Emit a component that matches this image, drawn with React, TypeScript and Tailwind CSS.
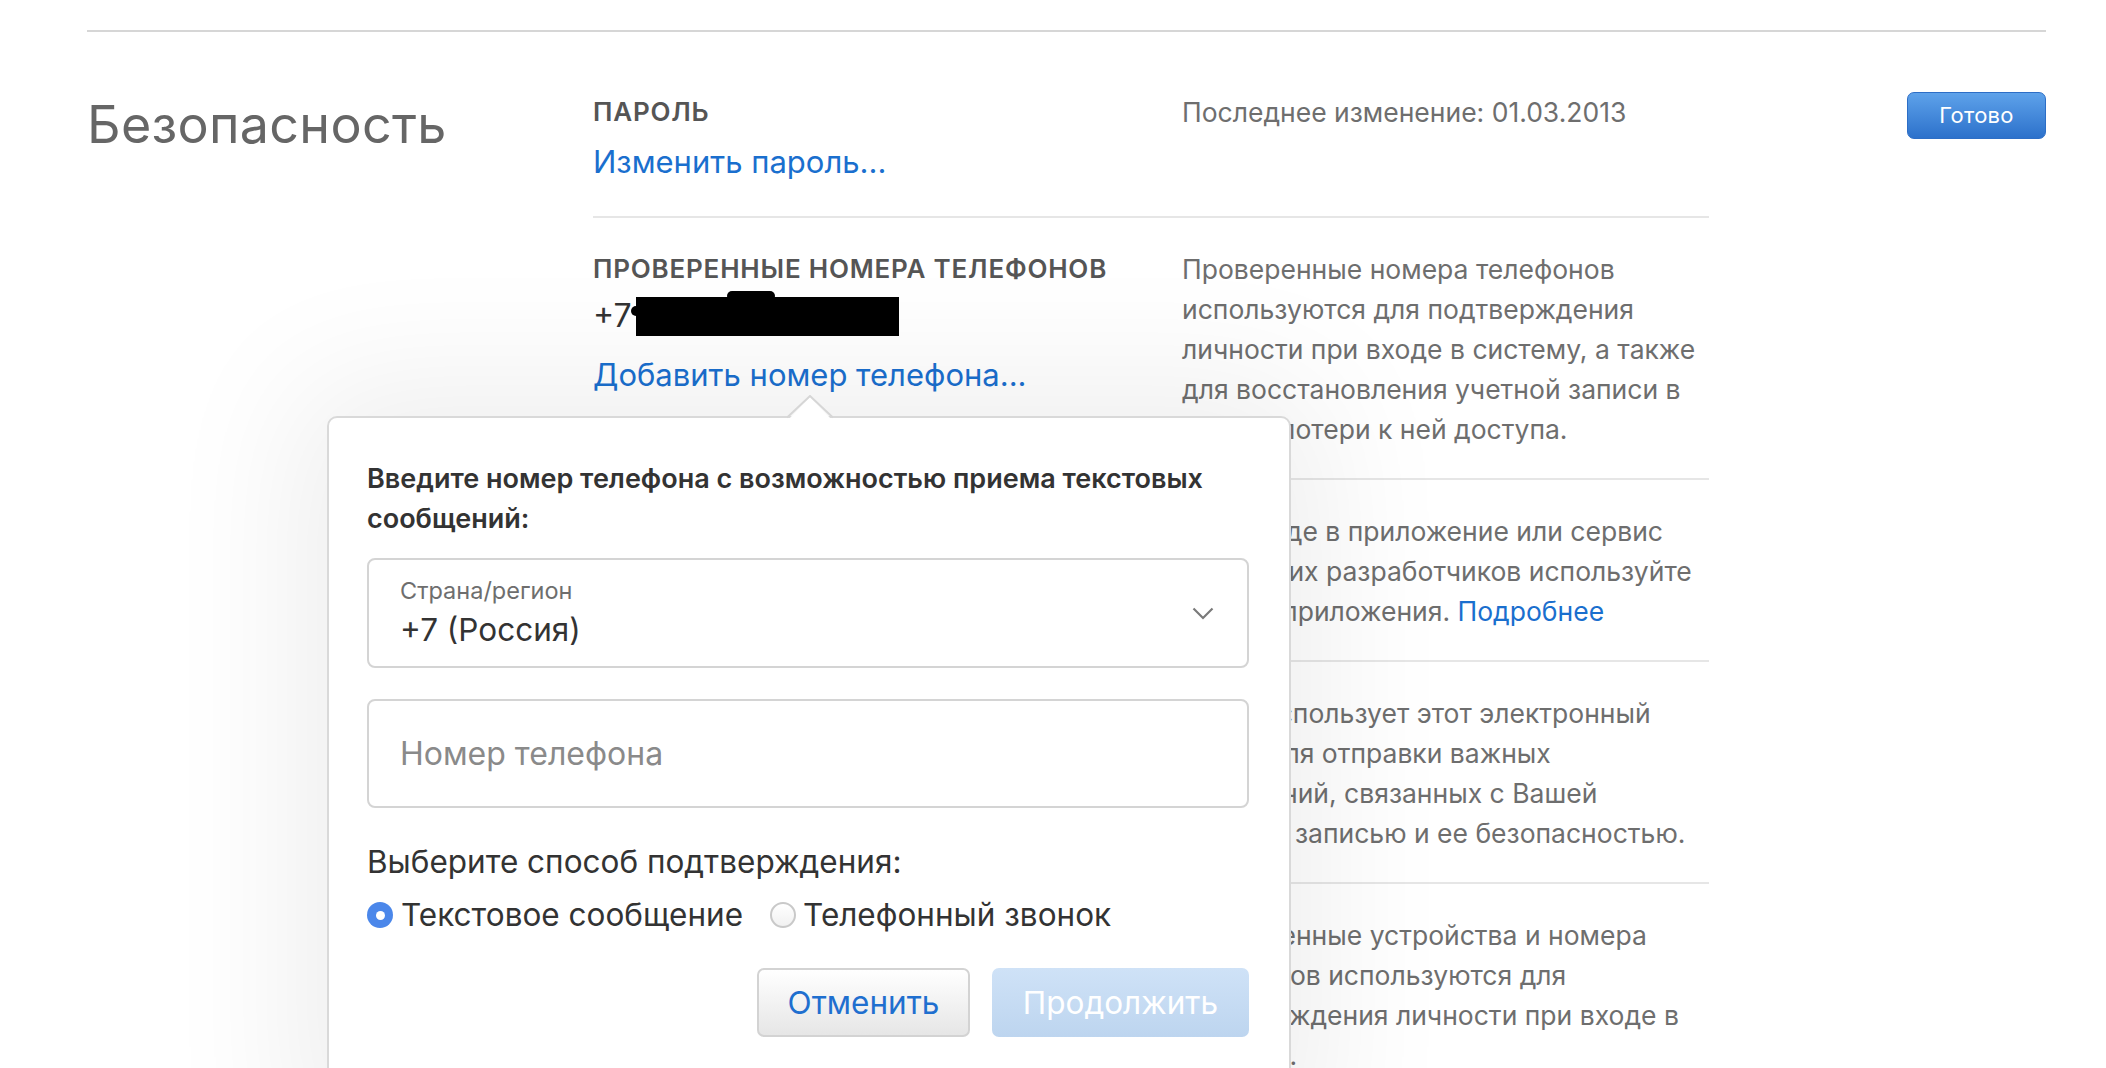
import React from 'react';

const font = { fontFamily: 'Inter, "Noto Sans", sans-serif' };

function Section({ left, right, className = '' }: { left?: React.ReactNode; right: React.ReactNode; className?: string }) {
  return (
    <div className={`grid grid-cols-[589px_527px] border-b-2 border-[#e6e6e6] ${className}`}>
      <div>{left}</div>
      <div className="text-[26.5px] leading-[40px] text-[#6e6e6e] whitespace-nowrap">{right}</div>
    </div>
  );
}

function Label({ children }: { children: React.ReactNode }) {
  return <div className="text-[26px] leading-[40px] font-semibold text-[#555] tracking-[0.8px]">{children}</div>;
}

function Radio({ checked }: { checked?: boolean }) {
  if (checked) {
    return (
      <span className="w-[26px] h-[26px] rounded-full bg-[#4b87ea] flex items-center justify-center shrink-0">
        <span className="w-[9px] h-[9px] rounded-full bg-white" />
      </span>
    );
  }
  return <span className="w-[26px] h-[26px] rounded-full border-2 border-[#c9c9c9] bg-gradient-to-b from-white to-[#f1f1f1] shrink-0" />;
}

export default function App() {
  return (
    <div className="relative w-[2106px] h-[1068px] overflow-hidden bg-white" style={font}>
      <div className="ml-[87px] w-[1959px]">
        <div className="mt-[30px] border-t-2 border-[#d6d6d6]" />
        <div className="flex">
          <h1 className="w-[506px] pt-[63px] text-[52px] leading-[60px] font-normal text-[#666] tracking-[0.3px]">
            Безопасность
          </h1>

          <div className="w-[1116px]">
            <Section
              className="pt-[60px] pb-[34px]"
              left={
                <>
                  <Label>ПАРОЛЬ</Label>
                  <div className="mt-[10px] text-[31px] leading-[40px] text-[#1a6fce]">Изменить пароль...</div>
                </>
              }
              right={<div>Последнее изменение: 01.03.2013</div>}
            />

            <Section
              className="pt-[31px] pb-[29px]"
              left={
                <>
                  <Label>ПРОВЕРЕННЫЕ НОМЕРА ТЕЛЕФОНОВ</Label>
                  <div className="relative mt-[7px] h-[40px] flex items-center text-[32px] text-[#333]">
                    <span>+7</span>
                    <span className="ml-[4px] w-[263px] h-[39px] bg-black" />
                    <span className="absolute left-[38px] top-[10px] w-[10px] h-[10px] rounded-full bg-black" />
                    <span className="absolute left-[134px] top-[-5px] w-[48px] h-[10px] rounded-full bg-black" />
                  </div>
                  <div className="mt-[19px] text-[31px] leading-[40px] text-[#1a6fce]">Добавить номер телефона...</div>
                </>
              }
              right={
                <>
                  Проверенные номера телефонов
                  <br />
                  используются для подтверждения
                  <br />
                  личности при входе в систему, а также
                  <br />
                  для восстановления учетной записи в
                  <br />
                  случае потери к ней доступа.
                </>
              }
            />

            <Section
              className="pt-[31px] pb-[29px]"
              right={
                <>
                  При входе в приложение или сервис
                  <br />
                  сторонних разработчиков используйте
                  <br />
                  пароль приложения. <span className="text-[#1a6fce]">Подробнее</span>
                </>
              }
            />

            <Section
              className="pt-[31px] pb-[29px]"
              right={
                <>
                  Apple использует этот электронный
                  <br />
                  адрес для отправки важных
                  <br />
                  сообщений, связанных с Вашей
                  <br />
                  учетной записью и ее безопасностью.
                </>
              }
            />

            <Section
              className="pt-[31px] pb-[28px] border-b-0"
              right={
                <>
                  Проверенные устройства и номера
                  <br />
                  телефонов используются для
                  <br />
                  подтверждения личности при входе в
                  <br />
                  систему.
                </>
              }
            />
          </div>

          <div className="flex-1 flex justify-end pt-[60px]">
            <button className="w-[139px] h-[47px] rounded-[7px] border border-[#2d6ec6] bg-gradient-to-b from-[#5ea2ea] to-[#2c71cb] text-white text-[22px] tracking-[0.3px]">
              Готово
            </button>
          </div>
        </div>
      </div>

      {/* popover */}
      <div className="absolute left-[327px] top-[416px] w-[964px] h-[720px] bg-white border-2 border-[#d9d9d9] rounded-t-[10px] shadow-[0_0_140px_30px_rgba(0,0,0,0.07)] pl-[38px] pr-[40px] pt-[41px]">
        <svg className="absolute left-[458px] top-[-23px]" width="46" height="26" viewBox="0 0 46 26">
          <polygon points="1,25 23,2 45,25" fill="#ffffff" />
          <polyline points="0,22.5 23,1 46,22.5" fill="none" stroke="#d6d6d6" strokeWidth="2" />
        </svg>

        <div className="text-[27px] leading-[40px] font-semibold text-[#333] whitespace-nowrap">
          Введите номер телефона с возможностью приема текстовых
          <br />
          сообщений:
        </div>

        <div className="mt-[19px] h-[110px] border-2 border-[#d4d4d4] rounded-[8px] pl-[31px] pr-[33px] flex items-center justify-between">
          <div>
            <div className="text-[23.5px] leading-[30px] text-[#6e6e6e]">Страна/регион</div>
            <div className="mt-[4px] text-[31.5px] leading-[40px] text-[#333]">+7 (Россия)</div>
          </div>
          <svg width="22" height="13" viewBox="0 0 22 13">
            <polyline points="1.5,1.5 11,11 20.5,1.5" fill="none" stroke="#7a7a7a" strokeWidth="2.2" />
          </svg>
        </div>

        <div className="mt-[31px] h-[109px] border-2 border-[#d4d4d4] rounded-[8px] pl-[31px] flex items-center">
          <span className="text-[32px] text-[#8a8a8a]">Номер телефона</span>
        </div>

        <div className="mt-[32px] text-[31.5px] leading-[44px] text-[#333]">Выберите способ подтверждения:</div>

        <div className="mt-[11px] h-[40px] flex items-center text-[31.5px] text-[#333]">
          <Radio checked />
          <span className="ml-[8px]">Текстовое сообщение</span>
          <span className="ml-[27px]" />
          <Radio />
          <span className="ml-[7px]">Телефонный звонок</span>
        </div>

        <div className="mt-[33px] flex justify-end gap-[22px]">
          <button className="w-[213px] h-[69px] rounded-[7px] border-2 border-[#d3d3d3] bg-gradient-to-b from-white to-[#e6e6e6] text-[31.5px] text-[#1f6fcf]">
            Отменить
          </button>
          <button className="w-[257px] h-[69px] rounded-[7px] bg-gradient-to-b from-[#cfe2f7] to-[#bdd5ef] text-[31.5px] text-white">
            Продолжить
          </button>
        </div>
      </div>
    </div>
  );
}
